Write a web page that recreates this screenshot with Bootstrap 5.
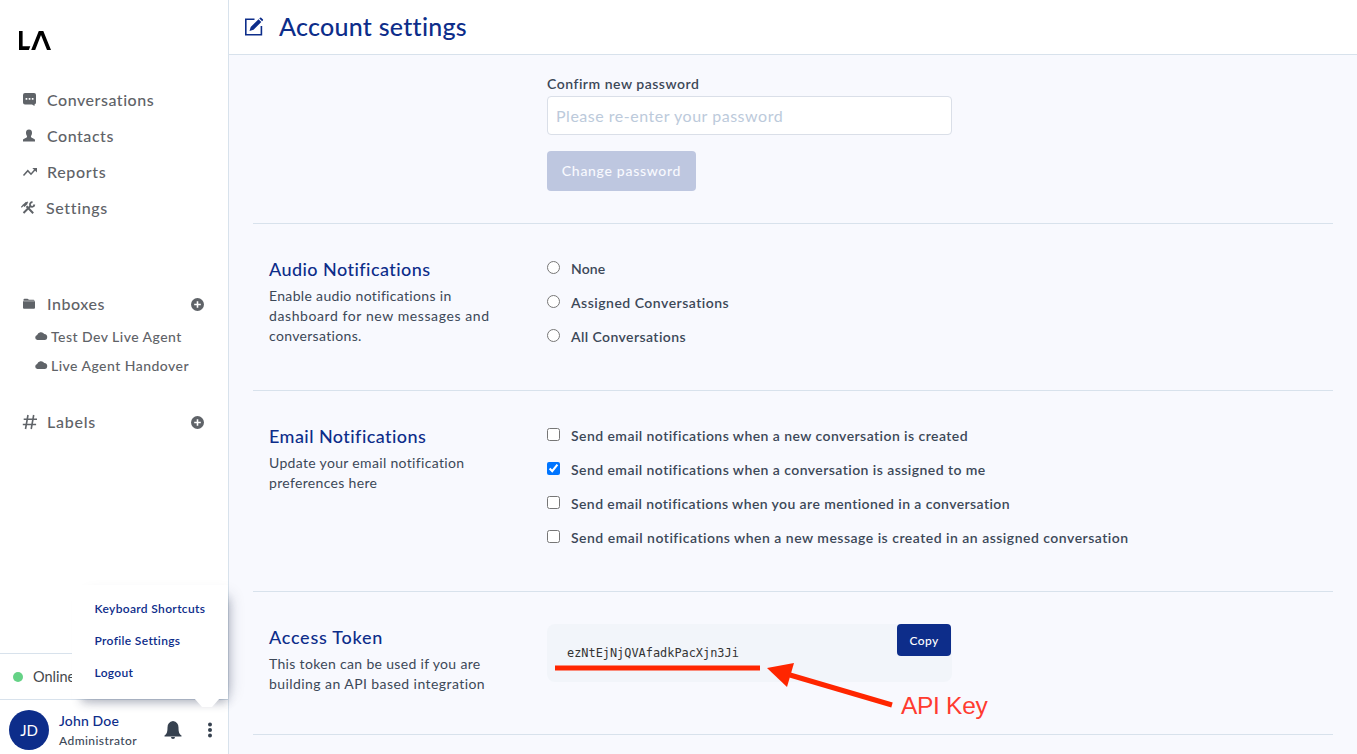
<!DOCTYPE html>
<html lang="en">
<head>
<meta charset="utf-8">
<meta name="viewport" content="width=device-width, initial-scale=1">
<title>Account settings</title>
<link href="https://cdn.jsdelivr.net/npm/bootstrap@5.3.0/dist/css/bootstrap.min.css" rel="stylesheet">
<style>
  :root { --brand: #0d2d8a; --ink: #3c4858; --muted: #5f6368; --line: #d8e2ec; --page: #f8f9fe; }
  body { font-family: Lato, "Noto Sans", sans-serif; font-variant-ligatures: none; font-size: 14px; color: var(--ink); height: 754px; overflow: hidden; }
  svg { display: block; flex: none; }
  .sidebar { width: 229px; border-right: 1px solid var(--line); }
  .brand-logo { height: 82px; padding: 31px 0 0 19px; }
  .side-link { height: 36px; color: var(--muted); font-size: 16px; font-weight: 500; padding-left: 22px; text-decoration: none; white-space: nowrap; letter-spacing: .53px; }
  .side-link .glyph { width: 25px; }
  .side-link .glyph-tools { width: 25px; margin-left: -1px; }
  .side-link .loose { letter-spacing: .64px; }
  .side-link.section-inboxes { margin-top: 60px; }
  .side-link.section-labels { margin-top: 24px; letter-spacing: .75px; }
  .side-link .add { margin-right: 24px; }
  .side-sub { height: 29px; color: var(--muted); font-size: 14px; font-weight: 500; padding-left: 34px; text-decoration: none; white-space: nowrap; letter-spacing: .46px; }
  .cloud { margin-right: 1px; }
  .status-row { height: 47px; border: solid var(--line); border-width: 1px 0; padding-left: 13px; font-size: 14.5px; color: #45484d; }
  .status-dot { width: 10px; height: 10px; margin-right: 10px; background: #65d286; }
  .user-row { height: 54px; padding: 10px 0 0 9px; }
  .avatar { width: 40px; height: 40px; margin-right: 10px; background: var(--brand); font-size: 15px; flex: none; }
  .user-name { width: 105px; white-space: nowrap; }
  .u-name { font-size: 14px; font-weight: 500; line-height: 21px; color: var(--brand); letter-spacing: .15px; }
  .u-role { font-size: 12px; font-weight: 500; line-height: 18px; letter-spacing: .42px; margin-top: 1px; }
  .bell { margin-top: 10px; }
  .dots { margin: 11px 0 0 25px; }
  .user-menu { left: 72px; top: 585px; width: 156px; height: 114px; box-shadow: 4px 9px 9px -5px rgba(40,50,80,.3), 9px 3px 14px -8px rgba(40,50,80,.25); padding: 8px 0 0 22.5px; }
  .user-menu a { display: flex; align-items: center; height: 32px; color: var(--brand); font-size: 12px; font-weight: 600; text-decoration: none; white-space: nowrap; letter-spacing: .34px; }
  .menu-tip { left: 192px; top: 698px; }
  .topbar { height: 55px; border-bottom: 1px solid var(--line); padding-left: 15px; }
  .topbar h1 { font-size: 25px; font-weight: 500; color: var(--brand); margin: -2px 0 0 14px; letter-spacing: .27px; }
  .content { background: var(--page); padding: 0 24px; }
  .setting { border-bottom: 1px solid var(--line); padding: 32px 16px 0; }
  .setting-password { height: 169px; padding-top: 19px; }
  .setting-audio { height: 167px; }
  .setting-email { height: 201px; }
  .setting-token { height: 143px; }
  .intro { width: 278px; padding-right: 50px; flex: none; }
  .intro h2 { font-size: 18px; font-weight: 500; line-height: 27px; margin: 0 0 3px; color: var(--brand); letter-spacing: .44px; }
  .setting-token .intro h2 { letter-spacing: .73px; }
  .intro p { font-size: 14px; line-height: 20px; margin: 0; white-space: nowrap; letter-spacing: .33px; }
  .intro .wider { letter-spacing: .59px; }
  .intro .wide { letter-spacing: .43px; }
  .opt { height: 26px; margin-bottom: 8px; font-size: 14px; font-weight: 600; white-space: nowrap; letter-spacing: .41px; }
  .opt span { margin-top: -2px; }
  .opt .wide { letter-spacing: .44px; }
  .opt .wider { letter-spacing: .49px; }
  .opt .tight { letter-spacing: .1px; }
  .opt input { width: 13px; height: 13px; margin: -4px 11px 0 0; accent-color: #0075ff; }
  .field { width: 405px; }
  .field label { font-weight: 600; line-height: 20px; display: block; letter-spacing: .51px; }
  .field .form-control { height: 39px; margin: 2px 0 16px; padding: 0 8px; font-size: 16px; border: 1px solid #dadfe8; border-radius: 4px; letter-spacing: .52px; }
  .field .form-control::placeholder { color: #bccadb; opacity: 1; }
  .btn-change { width: 149px; height: 40px; background: #bec7e0; color: #f8f9fe; font-size: 14px; font-weight: 500; border-radius: 4px; padding: 0 0 2px; border: 0; letter-spacing: .7px; }
  .token { height: 58px; background: #f2f5fa; border-radius: 8px; }
  .token code { font: 11.9px/58px "DejaVu Sans Mono", monospace; color: #333; padding-left: 20px; display: block; }
  .btn-copy { right: 1px; top: 0; width: 54px; height: 32px; background: var(--brand); color: #fff; font-size: 12px; font-weight: 500; border-radius: 4px; padding: 2px 0 0; border: 0; letter-spacing: .37px; }
  .annotation { left: 545px; top: 650px; pointer-events: none; }
  .annotation text { font: 24.5px "Liberation Sans", sans-serif; letter-spacing: -.3px; }
</style>
</head>
<body>
<div class="d-flex h-100 position-relative">
  <aside class="sidebar d-flex flex-column bg-white flex-shrink-0">
    <div class="brand-logo">
      <svg width="33" height="19" viewBox="0 0 33 19"><path d="M0 0h3.600v15.200h7.700L9.800 19H0zM19.800 0h4.500L32 19h-4L22 4 16.200 19h-4z"/></svg>
    </div>
    <nav class="nav flex-column flex-nowrap">
      <a class="side-link d-flex align-items-center" href="#"><span class="glyph"><svg width="16" height="16" viewBox="0 0 16 16"><path fill="#5f6368" d="M3 1h9a2 2 0 0 1 2 2v7.500a2 2 0 0 1-1.500 2v1.500L10 12.500H3a2 2 0 0 1-2-2V3a2 2 0 0 1 2-2z"/><path stroke="#fff" stroke-width="1.700" d="M3.600 6.800h1.700m1.400 0h1.700m1.400 0h1.700"/></svg></span><span>Conversations</span></a>
      <a class="side-link d-flex align-items-center" href="#"><span class="glyph"><svg width="16" height="16" viewBox="0 0 16 16"><path fill="#5f6368" d="M7 1.500c2.200 0 3.200 1.600 3 3.800-.2 1.800-1 2.500-1.100 3.500 0 1.300 4.100 1.600 4.100 3.400v1.300H1v-1.300c0-1.800 4.100-2.100 4.100-3.400C5 7.800 4.200 7.100 4 5.300 3.800 3.100 4.800 1.500 7 1.500z"/></svg></span><span>Contacts</span></a>
      <a class="side-link d-flex align-items-center" href="#"><span class="glyph"><svg width="16" height="16" viewBox="0 0 16 16"><path fill="none" stroke="#5f6368" stroke-width="1.500" d="M1.500 11.500 5.800 6.700l3.200 3.500L13.600 5"/><path fill="#5f6368" d="M10.300 3.900H15v4.600z"/></svg></span><span class="loose">Reports</span></a>
      <a class="side-link d-flex align-items-center" href="#"><span class="glyph glyph-tools"><svg width="16" height="16" viewBox="0 0 16 16"><g fill="none" stroke="#5f6368"><path stroke-width="2" d="m2.500 13 7-7M5.500 6.300l6.700 6.900"/><path stroke-width="2.600" d="M5.900 2.700 2.500 6"/><path stroke-width="1.200" d="M.3 7.300 2.500 5M5 3l2-1"/><path stroke-width="1.800" d="M11.500 2c-2.700.3-3 2.700-2 4s3.500 1.200 3.900-1.500"/></g></svg></span><span class="loose">Settings</span></a>
      <a class="side-link section-inboxes d-flex align-items-center" href="#"><span class="glyph"><svg width="16" height="16" viewBox="0 0 16 16"><path fill="#5f6368" d="M1.500 3.700q0-1 1-1h3L7 3.800h4.500q1 0 1 .9h-11zM1 5.300h12v6.400a1 1 0 0 1-1 1H2a1 1 0 0 1-1-1z"/></svg></span><span class="flex-grow-1">Inboxes</span><svg class="add" width="13" height="13" viewBox="0 0 13 13"><circle cx="6.500" cy="6.500" r="6.500" fill="#5f6368"/><path stroke="#fff" stroke-width="1.600" d="M6.500 3.200v6.600M3.200 6.500h6.600"/></svg></a>
      <a class="side-sub d-flex align-items-center" href="#"><svg class="cloud" width="16" height="14" viewBox="0 0 16 14"><path fill="#5f6368" d="M3.400 10A2.500 2.500 0 0 1 3.100 5.100 4 4 0 0 1 10.300 4 3 3 0 0 1 13.200 7.500 2.500 2.500 0 0 1 11 10z"/></svg><span>Test Dev Live Agent</span></a>
      <a class="side-sub d-flex align-items-center" href="#"><svg class="cloud" width="16" height="14" viewBox="0 0 16 14"><path fill="#5f6368" d="M3.400 10A2.500 2.500 0 0 1 3.100 5.100 4 4 0 0 1 10.300 4 3 3 0 0 1 13.200 7.500 2.500 2.500 0 0 1 11 10z"/></svg><span>Live Agent Handover</span></a>
      <a class="side-link section-labels d-flex align-items-center" href="#"><span class="glyph"><svg width="16" height="16" viewBox="0 0 16 16"><path fill="none" stroke="#5f6368" stroke-width="1.600" d="M6 1 3.500 15M11.700 1 9.200 15M1.700 5.200H15M.8 10.500h13.300"/></svg></span><span class="flex-grow-1">Labels</span><svg class="add" width="13" height="13" viewBox="0 0 13 13"><circle cx="6.500" cy="6.500" r="6.500" fill="#5f6368"/><path stroke="#fff" stroke-width="1.600" d="M6.500 3.200v6.600M3.200 6.500h6.600"/></svg></a>
    </nav>
    <div class="mt-auto">
      <div class="status-row d-flex align-items-center"><span class="status-dot rounded-circle"></span><span>Online</span></div>
      <div class="user-row d-flex align-items-start">
        <div class="avatar rounded-circle text-white d-flex align-items-center justify-content-center">JD</div>
        <div class="user-name"><div class="u-name">John Doe</div><div class="u-role">Administrator</div></div>
        <svg class="bell" width="18" height="20" viewBox="0 0 18 20"><path fill="#36414f" d="M9 1c3.700.7 5.500 3 5.500 6.500 0 4.500.7 6.500 3 8v1H.5v-1c2.300-1.500 3-3.500 3-8C3.500 4 5.300 1.700 9 1zM7 17h4a2 2 0 0 1-4 0z"/></svg>
        <svg class="dots" width="6" height="18" viewBox="0 0 6 18"><g fill="#36414f"><circle cx="3" cy="3.500" r="2"/><circle cx="3" cy="9" r="2"/><circle cx="3" cy="14.500" r="2"/></g></svg>
      </div>
    </div>
  </aside>

  <main class="flex-grow-1 d-flex flex-column">
    <header class="topbar d-flex align-items-center bg-white flex-shrink-0">
      <svg width="21" height="21" viewBox="0 0 21 21"><path fill="none" stroke="#0d2d8a" stroke-width="1.600" d="M10.500 2.200H1.800v15.600h15.600V9"/><path fill="#0d2d8a" d="m5.500 14 1.200-4 7.800-7.800L17.300 5 9.500 12.800zM15.300 1.400l.7-.7q.6-.6 1.200 0l1.600 1.600q.6.600 0 1.200l-.7.700z"/></svg>
      <h1>Account settings</h1>
    </header>
    <div class="content flex-grow-1 overflow-hidden">
      <section class="setting setting-password d-flex">
        <div class="intro"></div>
        <div class="field">
          <label for="confirm">Confirm new password</label>
          <input id="confirm" class="form-control shadow-none" type="password" placeholder="Please re-enter your password">
          <button class="btn btn-change">Change password</button>
        </div>
      </section>
      <section class="setting setting-audio d-flex">
        <div class="intro"><h2>Audio Notifications</h2><p>Enable audio notifications in<br><span class="wider">dashboard for new messages and</span><br>conversations.</p></div>
        <div>
          <label class="opt d-flex align-items-center"><input type="radio" name="audio"><span class="tight">None</span></label>
          <label class="opt d-flex align-items-center"><input type="radio" name="audio"><span class="wider">Assigned Conversations</span></label>
          <label class="opt d-flex align-items-center"><input type="radio" name="audio"><span>All Conversations</span></label>
        </div>
      </section>
      <section class="setting setting-email d-flex">
        <div class="intro"><h2>Email Notifications</h2><p>Update your email notification<br>preferences here</p></div>
        <div>
          <label class="opt d-flex align-items-center"><input type="checkbox"><span class="wide">Send email notifications when a new conversation is created</span></label>
          <label class="opt d-flex align-items-center"><input type="checkbox" checked><span class="wide">Send email notifications when a conversation is assigned to me</span></label>
          <label class="opt d-flex align-items-center"><input type="checkbox"><span>Send email notifications when you are mentioned in a conversation</span></label>
          <label class="opt d-flex align-items-center"><input type="checkbox"><span class="wider">Send email notifications when a new message is created in an assigned conversation</span></label>
        </div>
      </section>
      <section class="setting setting-token d-flex">
        <div class="intro"><h2>Access Token</h2><p>This token can be used if you are<br><span class="wide">building an API based integration</span></p></div>
        <div class="field token position-relative"><code>ezNtEjNjQVAfadkPacXjn3Ji</code><button class="btn btn-copy position-absolute">Copy</button></div>
      </section>
    </div>
  </main>

  <div class="user-menu position-absolute bg-white">
    <a href="#">Keyboard Shortcuts</a><a href="#">Profile Settings</a><a href="#">Logout</a>
  </div>
  <svg class="menu-tip position-absolute" width="30" height="10" viewBox="0 0 30 10"><path fill="#fff" d="M2 0h26L20 9H10z"/></svg>
  <svg class="annotation position-absolute" width="460" height="80" viewBox="0 0 460 80">
    <path stroke="#ff2600" stroke-width="5" d="M10 18h205"/><path stroke="#ff2600" stroke-width="5" d="m245 25 102 30"/><path fill="#ff2600" d="m222 18 27-5-7 24z"/>
    <text x="356" y="64" fill="#ff3b30">API Key</text>
  </svg>
</div>
<script src="https://cdn.jsdelivr.net/npm/bootstrap@5.3.0/dist/js/bootstrap.bundle.min.js"></script>
</body>
</html>
